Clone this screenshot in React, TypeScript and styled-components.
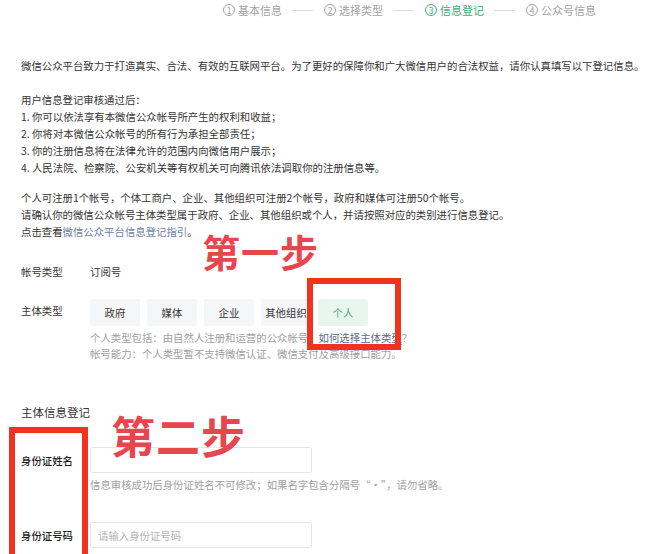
import React from "react";
import styled, { createGlobalStyle } from "styled-components";

const Global = createGlobalStyle`
  html, body { margin: 0; padding: 0; background: #fff; }
  body {
    font-family: "Noto Sans CJK SC", "Noto Sans", sans-serif;
    color: #353535;
  }
  * { box-sizing: border-box; }
`;

const GREEN = "#3dae76";
const RED = "#f0321e";

const Page = styled.div`
  position: relative;
  width: 650px;
  height: 554px;
  overflow: hidden;
  background: #fff;
`;

const Stepper = styled.div`
  display: flex;
  align-items: center;
  height: 20px;
  padding-left: 223px;
  font-size: 11px;
  color: #a3a3a3;
`;

const Step = styled.div<{ $active?: boolean }>`
  display: flex;
  align-items: center;
  gap: 3px;
  white-space: nowrap;
  color: ${(p) => (p.$active ? GREEN : "#a3a3a3")};
`;

const StepNum = styled.span`
  display: inline-flex;
  align-items: center;
  justify-content: center;
  width: 12px;
  height: 12px;
  border: 1px solid currentColor;
  border-radius: 50%;
  font-size: 8.5px;
  line-height: 1;
`;

const StepLine = styled.span`
  display: block;
  width: 21px;
  height: 1px;
  background: #dcdcdc;
  margin: 0 11px 0 10px;
`;

const Content = styled.div`
  padding: 0 0 0 21px;
  font-size: 10.4px;
  line-height: 17px;
  white-space: nowrap;
`;

const Block = styled.div<{ $mt: number }>`
  margin-top: ${(p) => p.$mt}px;
`;

const Line = styled.div``;

const Link = styled.span`
  color: #6d7fa3;
`;

const Row = styled.div<{ $mt: number; $align?: string }>`
  display: flex;
  align-items: ${(p) => p.$align || "flex-start"};
  margin-top: ${(p) => p.$mt}px;
`;

const Label = styled.div<{ $pt?: number; $strong?: boolean }>`
  width: 69px;
  flex-shrink: 0;
  padding-top: ${(p) => p.$pt || 0}px;
  color: ${(p) => (p.$strong ? "#1f1f1f" : "#353535")};
  font-weight: ${(p) => (p.$strong ? 500 : 400)};
`;

const Value = styled.div``;

const Options = styled.div`
  display: flex;
  gap: 7px;
`;

const Option = styled.div<{ $active?: boolean }>`
  width: 50px;
  height: 27px;
  display: flex;
  align-items: center;
  justify-content: center;
  border-radius: 2px;
  background: ${(p) => (p.$active ? "#e9f6ef" : "#f5f6f7")};
  color: ${(p) => (p.$active ? GREEN : "#353535")};
`;

const Help = styled.div`
  margin-top: 4px;
  margin-left: 69px;
  color: #a0a0a0;
  line-height: 16px;
`;

const HelpLink = styled.span`
  color: #5a6a8c;
  text-decoration: underline;
  text-underline-offset: 2px;
`;

const SectionTitle = styled.div<{ $mt: number }>`
  margin-top: ${(p) => p.$mt}px;
  font-size: 11.5px;
  color: #353535;
`;

const Input = styled.div`
  width: 222px;
  height: 26px;
  border: 1px solid #e6e6e6;
  border-radius: 2px;
  display: flex;
  align-items: center;
  padding-left: 7px;
  color: #b3b3b3;
`;

const Annotation = styled.div<{ $x: number; $y: number; $size: number }>`
  position: absolute;
  left: ${(p) => p.$x}px;
  top: ${(p) => p.$y}px;
  font-size: ${(p) => p.$size}px;
  line-height: 1;
  font-weight: 700;
  color: #e8464f;
  white-space: nowrap;
  letter-spacing: 1px;
`;

const Frame = styled.div<{ $x: number; $y: number; $w: number; $h: number }>`
  position: absolute;
  left: ${(p) => p.$x}px;
  top: ${(p) => p.$y}px;
  width: ${(p) => p.$w}px;
  height: ${(p) => p.$h}px;
  border: 6px solid ${RED};
`;

const steps = ["基本信息", "选择类型", "信息登记", "公众号信息"];
const types = ["政府", "媒体", "企业", "其他组织", "个人"];

export default function App() {
  return (
    <Page>
      <Global />
      <Stepper>
        {steps.map((s, i) => (
          <React.Fragment key={s}>
            {i > 0 && <StepLine />}
            <Step $active={i === 2}>
              <StepNum>{i + 1}</StepNum>
              {s}
            </Step>
          </React.Fragment>
        ))}
      </Stepper>
      <Content>
        <Block $mt={37}>
          <Line>
            微信公众平台致力于打造真实、合法、有效的互联网平台。为了更好的保障你和广大微信用户的合法权益，请你认真填写以下登记信息。
          </Line>
        </Block>
        <Block $mt={17}>
          <Line>用户信息登记审核通过后：</Line>
          <Line>1. 你可以依法享有本微信公众帐号所产生的权利和收益；</Line>
          <Line>2. 你将对本微信公众帐号的所有行为承担全部责任；</Line>
          <Line>3. 你的注册信息将在法律允许的范围内向微信用户展示；</Line>
          <Line>4. 人民法院、检察院、公安机关等有权机关可向腾讯依法调取你的注册信息等。</Line>
        </Block>
        <Block $mt={13}>
          <Line>个人可注册1个帐号，个体工商户、企业、其他组织可注册2个帐号，政府和媒体可注册50个帐号。</Line>
          <Line>请确认你的微信公众帐号主体类型属于政府、企业、其他组织或个人，并请按照对应的类别进行信息登记。</Line>
          <Line>
            点击查看<Link>微信公众平台信息登记指引</Link>。
          </Line>
        </Block>
        <Row $mt={23}>
          <Label>帐号类型</Label>
          <Value>订阅号</Value>
        </Row>
        <Row $mt={19}>
          <Label $pt={3}>主体类型</Label>
          <Options>
            {types.map((t) => (
              <Option key={t} $active={t === "个人"}>
                {t}
              </Option>
            ))}
          </Options>
        </Row>
        <Help>
          <Line>
            个人类型包括：由自然人注册和运营的公众帐号。<HelpLink>如何选择主体类型</HelpLink>？
          </Line>
          <Line>帐号能力：个人类型暂不支持微信认证、微信支付及高级接口能力。</Line>
        </Help>
        <SectionTitle $mt={42}>主体信息登记</SectionTitle>
        <Row $mt={26} $align="center">
          <Label $strong>身份证姓名</Label>
          <Input />
        </Row>
        <Help>
          <Line>信息审核成功后身份证姓名不可修改；如果名字包含分隔号“·”，请勿省略。</Line>
        </Help>
        <Row $mt={29} $align="center">
          <Label $strong>身份证号码</Label>
          <Input>请输入身份证号码</Input>
        </Row>
      </Content>
      <Annotation $x={202} $y={232} $size={38}>第一步</Annotation>
      <Annotation $x={111} $y={413} $size={44}>第二步</Annotation>
      <Frame $x={307} $y={278} $w={94} $h={72} />
      <Frame $x={9} $y={427} $w={79} $h={140} />
    </Page>
  );
}
